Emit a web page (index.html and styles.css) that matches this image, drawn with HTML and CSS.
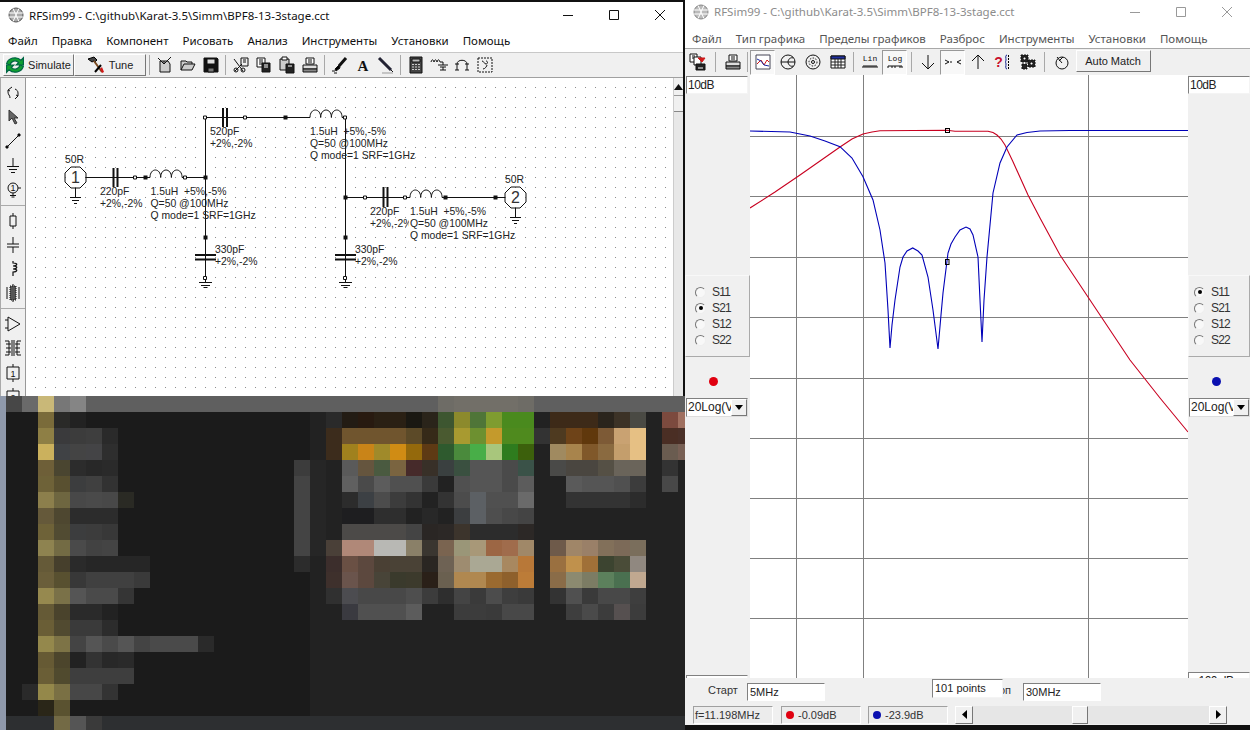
FILE: index.html
```html
<!DOCTYPE html>
<html lang="ru">
<head>
<meta charset="utf-8">
<title>RFSim99</title>
<link rel="stylesheet" href="styles.css">
</head>
<body>
<div class="desktop">

<section class="win win-left">
  <header class="title">
    <svg class="appicon" viewBox="0 0 16 16"><circle cx="8" cy="8" r="7" fill="#aaa" stroke="#555"/><path d="M1 6h14M1 10h14M5 1.500L11 14.500M11 1.500L5 14.500" stroke="#fff"/></svg>
    <span class="title-text">RFSim99 - C:\github\Karat-3.5\Simm\BPF8-13-3stage.cct</span>
    <div class="caption">
      <span class="capbtn"><svg viewBox="0 0 12 12"><path d="M1 6.500h10"/></svg></span>
      <span class="capbtn"><svg viewBox="0 0 12 12"><path d="M1.500 1.500h9v9h-9z"/></svg></span>
      <span class="capbtn"><svg viewBox="0 0 12 12"><path d="M1 1l10 10M11 1L1 11"/></svg></span>
    </div>
  </header>
  <nav class="menu">
    <span>Файл</span><span>Правка</span><span>Компонент</span><span>Рисовать</span><span>Анализ</span><span>Инструменты</span><span>Установки</span><span>Помощь</span>
  </nav>
  <div class="toolbar toolbar-left">
    <button class="tbtn tbtn-sim"><svg class="ico18" viewBox="1.500 1.500 15 15"><path d="M2 8a7 6 0 0 1 12-3l2-2v6h-6l2-2a4 4 0 0 0-7 2z" fill="#10a030" stroke="#064"/><path d="M16 10a7 6 0 0 1-12 3l-2 2v-6h6l-2 2a4 4 0 0 0 7-2z" fill="#10a030" stroke="#064"/></svg>Simulate</button>
    <button class="tbtn tbtn-tune"><svg class="ico18" viewBox="0 0 18 18"><path d="M1 3l6-2 3 3-2 2-1-1-2 1z" fill="#444" stroke="#000"/><path d="M7 5l8 11" stroke="#7a4a20" stroke-width="2" fill="none"/><path d="M14 9l-6 7" stroke="#000" stroke-width="2" fill="none"/><path d="M15 11l2 5-2 1-2-4z" fill="#d01818"/></svg>Tune</button>
    <i class="sep"></i>
    <span class="cell"><svg class="ico" viewBox="0 0 18 18"><path d="M4 5h8l2 3v8H4z" fill="#ccc"/><path d="M2 2l6 6 7-7M8 8v-3"/></svg></span>
    <span class="cell"><svg class="ico" viewBox="0 0 18 18"><path d="M2 14V5h5l1 1h5v2M2 14l3-6h11l-3 6z" fill="#ccc"/></svg></span>
    <span class="cell"><svg class="ico" viewBox="0 0 18 18"><path d="M2 2h13l1 1v13H2z" fill="#111"/><path d="M5 3h8v5H5z" fill="#ddd"/><path d="M6 12h6v4H6z" fill="#777"/></svg></span>
    <i class="sep"></i>
    <span class="cell"><svg class="ico" viewBox="0 0 18 18"><path d="M9 2h7v8H9zM11 4h3M11 6h3"/><path d="M2 3l9 12M10 8L3 15"/><circle cx="4" cy="14" r="2"/><circle cx="11" cy="14" r="2"/></svg></span>
    <span class="cell"><svg class="ico" viewBox="0 0 18 18"><path d="M2 2h8v9H2zM4 4h4M4 6h4M4 8h4" fill="#fff"/><path d="M7 7h8v9H7z" fill="#222"/><path d="M9 9h4M9 11h4" stroke="#fff"/></svg></span>
    <span class="cell"><svg class="ico" viewBox="0 0 18 18"><path d="M2 3h9v11H2z" fill="#ccc"/><path d="M4 1h5v3H4z" fill="#fff"/><path d="M8 8h8v9H8z" fill="#222"/><path d="M10 10h4" stroke="#fff"/></svg></span>
    <span class="cell"><svg class="ico" viewBox="0 0 18 18"><path d="M5 2h8v6H5zM7 4h4M7 6h4" fill="#fff"/><path d="M2 9h14v4H2z" fill="#ddd"/><path d="M2 13h14v3H2z" fill="#888"/></svg></span>
    <i class="sep"></i>
    <span class="cell"><svg class="ico" viewBox="0 0 18 18"><path d="M15 2l-7 8" stroke-width="3"/><path d="M8 9l-4 4 1 2 4-3z" fill="#000"/><path d="M1 15h3M3 17h3"/></svg></span>
    <span class="cell"><svg class="ico" viewBox="0 0 18 18"><text x="9" y="15" class="serif-a">A</text></svg></span>
    <span class="cell"><svg class="ico" viewBox="0 0 18 18"><path d="M2 2l12 12" stroke="#223" stroke-width="3"/><path d="M14 14l2 2"/><path d="M5 17h11" stroke="#999"/></svg></span>
    <i class="sep"></i>
    <span class="cell"><svg class="ico" viewBox="0 0 18 18"><path d="M3 1h12v16H3z" fill="#444"/><path d="M5 3h8v3H5z" fill="#bbb"/><path d="M5 8.500h8M5 11h8M5 13.500h8" stroke="#ccc" stroke-dasharray="2 1"/></svg></span>
    <span class="cell"><svg class="ico" viewBox="0 0 18 18"><path d="M1 6c1-3 2-3 3 0c1-3 2-3 3 0c1-3 2-3 3 0h3v3M8 9h10M10 11h6M13 11v3M10 14h6"/></svg></span>
    <span class="cell"><svg class="ico" viewBox="0 0 18 18"><path d="M4 14V8c0-5 10-5 10 0v6M2 14h4M12 14h4M2 8h4M12 8h4"/></svg></span>
    <span class="cell"><svg class="ico" viewBox="0 0 18 18"><path d="M2 2h14v14H2z" stroke-dasharray="2 1"/><path d="M6 5c2 0 2 3 4 3s2-3 0-3M7 13c2 0 4-3 4-4"/></svg></span>
  </div>
  <div class="body">
    <aside class="palette">
      <span class="tool"><svg class="ico" viewBox="0 0 18 18"><path d="M8 3L4 6l2 1M4 6v2c0 3 2 3 2 6M11 15l3-3-2-1M14 12V9c0-2-1-3-3-4"/></svg></span>
      <span class="tool"><svg class="ico" viewBox="0 0 18 18"><path d="M5 2v11l3-3 3 6 2-1-3-5h4z" fill="#666" stroke="#333"/></svg></span>
      <span class="tool"><svg class="ico" viewBox="0 0 18 18"><path d="M3 15L15 3"/><path d="M2 14h2v2H2zM14 2h2v2h-2z" fill="#000"/></svg></span>
      <span class="tool"><svg class="ico" viewBox="0 0 18 18"><path d="M9 2v8M3 10.500h12M5 13.500h8M7 16.500h4"/></svg></span>
      <span class="tool"><svg class="ico" viewBox="0 0 18 18"><circle cx="9" cy="8" r="5"/><path d="M9 13v2M6 15.500h6M7.500 17h3M14 8h3"/><text x="9" y="11" class="mini">1</text></svg></span>
      <i class="hsep"></i>
      <span class="tool"><svg class="ico" viewBox="0 0 18 18"><path d="M6 4h6v10H6zM9 1v3M9 14v3"/></svg></span>
      <span class="tool"><svg class="ico" viewBox="0 0 18 18"><path d="M9 1v7M3 8h12M3 11h12M9 11v6"/></svg></span>
      <span class="tool"><svg class="ico" viewBox="0 0 18 18"><path d="M9 1v2c6 0 4 3 0 3c6 0 4 3 0 3c6 0 4 3 0 3v4" stroke-width="1.200"/></svg></span>
      <span class="tool"><svg class="ico" viewBox="0 0 18 18"><path d="M9 0v2M9 16v2M3 3v12M15 3v12"/><path d="M6 2h6v14H6z" fill="#555" stroke-dasharray="1 1"/></svg></span>
      <i class="hsep hsep-b"></i>
      <span class="tool"><svg class="ico" viewBox="0 0 18 18"><path d="M4 2l12 7-12 7zM1 5h3M1 13h3"/></svg></span>
      <span class="tool"><svg class="ico" viewBox="0 0 18 18"><path d="M1 2h4v14H1M17 2h-4v14h4M8 1v16M10 1v16M2 5h5M2 9h5M2 13h5M11 5h5M11 9h5M11 13h5"/></svg></span>
      <span class="tool tool-gap"><svg class="ico" viewBox="0 0 18 18"><path d="M3 3h12v12H3zM9 0v3M9 15v3"/><text x="9" y="13" class="mini">1</text></svg></span>
      <span class="tool"><svg class="ico" viewBox="0 0 18 18"><path d="M3 3h12v12H3zM9 0v3M9 15v3"/><text x="9" y="13" class="mini">2</text></svg></span>
    </aside>
    <svg class="canvas" viewBox="27 78 646 318">
      <defs><pattern id="dots" x="35" y="87" width="10" height="10" patternUnits="userSpaceOnUse"><rect width="1" height="1" fill="#8c8c8c"/></pattern></defs>
      <rect x="27" y="78" width="646" height="318" fill="url(#dots)"/>
      <g class="wire">
        <path d="M85.500 177.500H135M145 177.500H150M182 177.500H205.500M205.500 117.500V278M205.500 117.500H245M245 117.500H303M303 117.500H310M342 117.500H345.500V278M345.500 197.500H365M365 197.500H405M405 197.500H410M442 197.500H505M75.500 188V197M205.500 278V282M345.500 278V282M515.500 208V217M135 177.500H145"/>
        <path d="M150 177.500c0-10 10.700-10 10.700 0c0-10 10.700-10 10.700 0c0-10 10.700-10 10.700 0M310 117.500c0-10 10.700-10 10.700 0c0-10 10.700-10 10.700 0c0-10 10.700-10 10.700 0M410 197.500c0-10 10.700-10 10.700 0c0-10 10.700-10 10.700 0c0-10 10.700-10 10.700 0"/>
        <path d="M70 197.500h11M72 200.500h7M74 203.500h3M199 282.500h13M201 285.500h9M203.500 287.500h4M339 282.500h13M341 285.500h9M343.500 287.500h4M510 217.500h11M512 220.500h7M514 223.500h3"/>
        <path d="M65 173l6-6h9l6 6v9l-6 6h-9l-6-6zM505 193l6-6h9l6 6v9l-6 6h-9l-6-6z"/>
      </g>
      <g class="plate">
        <path d="M113.500 168v19M117.500 168v19M223 108v19M227 108v19M383.500 187v20M387.500 187v20M195 255h21M195 259.500h21M335 255h21M335 259.500h21"/>
      </g>
      <g class="open">
        <path d="M133.500 176h3v3h-3zM183.500 176h3v3h-3zM203.500 116h3v3h-3zM243.500 116h3v3h-3zM343.500 116h3v3h-3zM363.500 196h3v3h-3zM403.500 196h3v3h-3zM203.500 276.500h3v3h-3zM343.500 276.500h3v3h-3z"/>
      </g>
      <g class="solid">
        <path d="M143.500 175.500h4v4h-4zM203.500 175.500h4v4h-4zM203.500 235.500h4v4h-4zM283.500 115.500h4v4h-4zM343.500 195.500h4v4h-4zM343.500 235.500h4v4h-4zM443.500 195.500h4v4h-4zM493.500 195.500h4v4h-4z"/>
      </g>
      <g class="lbl">
        <text x="65" y="163">50R</text>
        <text x="505" y="183">50R</text>
        <text x="100" y="195">220pF</text><text x="100" y="207">+2%,-2%</text>
        <text x="150.500" y="195">1.5uH  +5%,-5%</text><text x="150.500" y="207">Q=50 @100MHz</text><text x="150.500" y="219">Q mode=1 SRF=1GHz</text>
        <text x="210" y="135">520pF</text><text x="210" y="147">+2%,-2%</text>
        <text x="310" y="135">1.5uH  +5%,-5%</text><text x="310" y="147">Q=50 @100MHz</text><text x="310" y="159">Q mode=1 SRF=1GHz</text>
        <text x="215" y="253">330pF</text><text x="215" y="265">+2%,-2%</text>
        <text x="355" y="253">330pF</text><text x="355" y="265">+2%,-2%</text>
        <text x="370" y="215">220pF</text><text x="370" y="227">+2%,-2%</text>
        <rect x="409" y="217" width="80" height="12" fill="#fff"/>
        <text x="410" y="215">1.5uH  +5%,-5%</text><text x="410" y="227">Q=50 @100MHz</text><text x="410" y="239">Q mode=1 SRF=1GHz</text>
      </g>
      <text x="75.500" y="183" class="portnum">1</text>
      <text x="515.500" y="203" class="portnum">2</text>
    </svg>
    <div class="vscroll">
      <span class="vbtn"><svg viewBox="0 0 9 6"><path d="M4.500 0L9 6H0z"/></svg></span>
      <span class="vthumb"></span>
    </div>
  </div>
</section>

<section class="win win-right">
  <header class="title title-r">
    <svg class="appicon" viewBox="0 0 16 16"><circle cx="8" cy="8" r="7" fill="#bbb" stroke="#888"/><path d="M1 6h14M1 10h14M5 1.500L11 14.500M11 1.500L5 14.500" stroke="#fff"/></svg>
    <span class="title-text">RFSim99 - C:\github\Karat-3.5\Simm\BPF8-13-3stage.cct</span>
    <div class="caption caption-dim">
      <span class="capbtn"><svg viewBox="0 0 12 12"><path d="M1 6.500h10"/></svg></span>
      <span class="capbtn"><svg viewBox="0 0 12 12"><path d="M1.500 1.500h9v9h-9z"/></svg></span>
      <span class="capbtn"><svg viewBox="0 0 12 12"><path d="M1 1l10 10M11 1L1 11"/></svg></span>
    </div>
  </header>
  <nav class="menu menu-r">
    <span>Файл</span><span>Тип графика</span><span>Пределы графиков</span><span>Разброс</span><span>Инструменты</span><span>Установки</span><span>Помощь</span>
  </nav>
  <div class="toolbar toolbar-right">
    <span class="rcell"><svg class="ico" viewBox="0 0 18 18"><path d="M1 1h7v8H1zM3 3h3M3 5h3" fill="#fff"/><path d="M5 4h7v8H5z" fill="#fff"/><path d="M9 5h7l-3 4z" fill="#d01818" stroke="#d01818"/><path d="M7 11h9v6H7z" fill="#222"/><path d="M9 15h5" stroke="#fff"/></svg></span>
    <i class="sep sep-10"></i>
    <span class="rcell"><svg class="ico" viewBox="0 0 18 18"><path d="M5 2h8v6H5zM7 4h4M7 6h4" fill="#fff"/><path d="M2 9h14v4H2z" fill="#ddd"/><path d="M2 13h14v3H2z" fill="#888"/></svg></span>
    <i class="sep sep-5"></i>
    <span class="rcell is-on"><svg class="ico" viewBox="0 0 18 18"><path d="M2 2h14v14H2z" fill="#fff" stroke="#445"/><path d="M3 11l4-4 3 5 3-5 2 2" stroke="#d01818"/><path d="M3 6l4 2 3 4 5 1" stroke="#1828a0"/></svg></span>
    <span class="rcell"><svg class="ico" viewBox="0 0 18 18"><circle cx="9" cy="9" r="7"/><path d="M2 9h14M9 9c0-3 3-5 5-4M9 9c0 3 3 5 5 4"/></svg></span>
    <span class="rcell"><svg class="ico" viewBox="0 0 18 18"><circle cx="9" cy="9" r="7"/><circle cx="9" cy="9" r="4" stroke-dasharray="1.500 1.500"/><circle cx="9" cy="9" r="1.500"/></svg></span>
    <span class="rcell"><svg class="ico" viewBox="0 0 18 18"><path d="M2 3h14v12H2z" fill="#fff"/><path d="M2 3h14v3H2z" fill="#2030a0"/><path d="M2 9h14M2 12h14M6 6v9M9 6v9M12 6v9" stroke="#222"/></svg></span>
    <i class="sep sep-7"></i>
    <span class="rcell"><svg class="ico" viewBox="0 0 18 18"><text x="9" y="8" class="tiny">Lin</text><path d="M2 13h14M2 13v2M4 13v2M6 13v2M8 13v2M10 13v2M12 13v2M14 13v2M16 13v2"/></svg></span>
    <span class="rcell is-on"><svg class="ico" viewBox="0 0 18 18"><text x="9" y="8" class="tiny">Log</text><path d="M2 13h14M2 13v2M6 13v2M9 13v2M14 13v2M16 13v2"/></svg></span>
    <i class="sep sep-8"></i>
    <span class="rcell"><svg class="ico" viewBox="0 0 18 18"><path d="M9 2v14M3 10l6 6 6-6"/></svg></span>
    <span class="rcell is-on"><svg class="ico" viewBox="0 0 18 18"><path d="M1 7l4 2-4 2M17 7l-4 2 4 2M6 9h2"/></svg></span>
    <span class="rcell"><svg class="ico" viewBox="0 0 18 18"><path d="M9 16V2M3 8l6-6 6 6"/></svg></span>
    <span class="rcell"><svg class="ico" viewBox="0 0 18 18"><text x="4.500" y="14" class="redq">?</text><path d="M13 2c-2 0-1 3-1 5s-1 2-1 2 1 0 1 2-1 5 1 5" stroke="#102090"/><path d="M14.500 2v14" stroke="#000" stroke-dasharray="2 1"/></svg></span>
    <span class="rcell"><svg class="ico" viewBox="0 0 18 18"><path d="M2 2h7v7H2zM9 7h7v7H9zM3 11h5v5H3z" fill="#222" stroke-dasharray="2 1"/><circle cx="5.500" cy="5.500" r="1.500" fill="#fff"/><circle cx="12.500" cy="10.500" r="1.500" fill="#fff"/></svg></span>
    <i class="sep sep-9"></i>
    <span class="rcell"><svg class="ico" viewBox="0 0 18 18"><circle cx="9" cy="10" r="6"/><path d="M4 4l5 6M6 8l4-4"/></svg></span>
    <button class="tbtn tbtn-match">Auto Match</button>
  </div>
  <div class="main">
    <aside class="side">
      <div class="edit">10dB</div>
      <div class="group">
        <label class="radio-row"><i class="radio"></i>S11</label>
        <label class="radio-row"><i class="radio radio-on"></i>S21</label>
        <label class="radio-row"><i class="radio"></i>S12</label>
        <label class="radio-row"><i class="radio"></i>S22</label>
      </div>
      <i class="led led-red"></i>
      <div class="combo"><span class="combo-text">20Log(V)</span><span class="combo-btn"><svg viewBox="0 0 8 5"><path d="M0 0h8L4 5z"/></svg></span></div>
      <div class="edit edit-low"></div>
    </aside>
    <svg class="graph" viewBox="750 75 438 603">
      <path class="grid" d="M750 136.500H1188M750 196.500H1188M750 257.500H1188M750 317.500H1188M750 378.500H1188M750 438.500H1188M750 498.500H1188M750 558.500H1188M750 618.500H1188M796.500 75V678M863.500 75V678M1088.500 75V678"/>
      <polyline class="trace-red" points="750,208 775,192 800,175 820,161 840,147 852,139 863,134 872,132 880,130.700 947,130.300 955,131.300 988,131.300 993,132.500 997,135 1001,139 1005,145 1013,161.700 1028,195 1040,218 1060,255 1090,300 1130,360 1160,398 1188,432"/>
      <polyline class="trace-blue" points="750,131 790,132 810,136 825,141 840,146.700 852,158 863,176.700 873,200 880,230 885,263 888,310 890,348 892,325 895,300 900,267 903,257 907,251 912.700,248 918,251 922,255 928,277 933,310 938,349 941,315 943,293 948,253 951,244 955,237 960,230 966,227 970,229 973,235 978,257 980,300 982,342 984,300 987,257 993,193 1000,163 1007,147 1017,135 1027,132.500 1040,131 1070,130.500 1188,130.500"/>
      <rect class="mark" x="945.500" y="128.500" width="4" height="4"/>
      <rect class="mark" x="945.500" y="259.500" width="3.500" height="5"/>
    </svg>
    <aside class="side side-r">
      <div class="edit">10dB</div>
      <div class="group">
        <label class="radio-row"><i class="radio radio-on"></i>S11</label>
        <label class="radio-row"><i class="radio"></i>S21</label>
        <label class="radio-row"><i class="radio"></i>S12</label>
        <label class="radio-row"><i class="radio"></i>S22</label>
      </div>
      <i class="led led-blue"></i>
      <div class="combo"><span class="combo-text">20Log(V)</span><span class="combo-btn"><svg viewBox="0 0 8 5"><path d="M0 0h8L4 5z"/></svg></span></div>
      <div class="edit edit-low edit-low-r">-100 dB</div>
    </aside>
  </div>
  <div class="range">
    <span class="range-start">Старт</span>
    <div class="edit edit-range">5MHz</div>
    <span class="range-stop">Стоп</span>
    <div class="edit edit-range">30MHz</div>
    <div class="edit points">101 points</div>
  </div>
  <div class="status">
    <span class="stat stat-f">f=11.198MHz</span>
    <span class="stat"><i class="led led-sm led-red"></i>-0.09dB</span>
    <span class="stat"><i class="led led-sm led-blue"></i>-23.9dB</span>
    <div class="hscroll">
      <span class="hbtn"><svg viewBox="0 0 5 9"><path d="M5 0v9L0 4.500z"/></svg></span>
      <span class="hthumb"></span>
      <span class="hbtn hbtn-end"><svg viewBox="0 0 5 9"><path d="M0 0v9l5-4.500z"/></svg></span>
    </div>
  </div>
</section>

<section class="win win-blur">
<svg class="mosaic" viewBox="0 0 43 21" shape-rendering="crispEdges">
<rect class="wide" x="0" y="0" width="43" height="1" fill="#5f5f5f"/>
<rect class="wide" x="0" y="1" width="19" height="19" fill="#1b1b1b"/>
<rect class="wide" x="19" y="1" width="24" height="19" fill="#222"/>
<rect class="wide" x="0" y="20" width="43" height="1" fill="#2d2f31"/>
<g transform="translate(0 0)"><rect x="0" fill="#474747"/><rect x="1" fill="#6a6a6a"/><rect x="2" fill="#c9b878"/><rect x="3" fill="#777"/><rect x="4" fill="#858585"/><rect x="27" fill="#6e6c66"/><rect x="28" fill="#726f68"/><rect x="29" fill="#726f68"/><rect x="30" fill="#726f68"/><rect x="31" fill="#726f68"/><rect x="32" fill="#6e6c66"/></g>
<g transform="translate(0 1)"><rect x="2" fill="#7a6b3a"/><rect x="3" fill="#2a2a28"/><rect x="4" fill="#222"/><rect x="20" fill="#2a2a2a"/><rect x="21" fill="#231c14"/><rect x="22" fill="#281a10"/><rect x="23" fill="#2a2014"/><rect x="24" fill="#2a2014"/><rect x="25" fill="#1a1812"/><rect x="26" fill="#2a241a"/><rect x="27" fill="#3d5630"/><rect x="28" fill="#8c8a2c"/><rect x="29" fill="#4f7538"/><rect x="30" fill="#7f9c30"/><rect x="31" fill="#4a8a1e"/><rect x="32" fill="#4a8a1e"/><rect x="34" fill="#3d2a18"/><rect x="35" fill="#3d2a18"/><rect x="36" fill="#3d2a18"/><rect x="37" fill="#2a241c"/><rect x="38" fill="#3c3226"/><rect x="39" fill="#4a4a44"/><rect x="41" fill="#7c4a3e"/><rect x="42" fill="#a07060"/></g>
<g transform="translate(0 2)"><rect x="2" fill="#8e7f45"/><rect x="3" fill="#3a3a3c"/><rect x="4" fill="#3c3c3c"/><rect x="5" fill="#3e3e3e"/><rect x="6" fill="#2a2a2a"/><rect x="20" fill="#3c2c1c"/><rect x="21" fill="#70552e"/><rect x="22" fill="#70552e"/><rect x="23" fill="#70552e"/><rect x="24" fill="#70552e"/><rect x="25" fill="#5c4a28"/><rect x="26" fill="#362a18"/><rect x="27" fill="#4a5a30"/><rect x="28" fill="#a89a30"/><rect x="29" fill="#6d9030"/><rect x="30" fill="#c49a2c"/><rect x="31" fill="#4f8a1e"/><rect x="32" fill="#4f8a1e"/><rect x="33" fill="#333"/><rect x="34" fill="#4e3a20"/><rect x="35" fill="#6e4318"/><rect x="36" fill="#60380c"/><rect x="37" fill="#7d5a36"/><rect x="38" fill="#c9a272"/><rect x="39" fill="#e6c084"/><rect x="41" fill="#4a2e24"/><rect x="42" fill="#4a3028"/></g>
<g transform="translate(0 3)"><rect x="2" fill="#cbb15d"/><rect x="3" fill="#404245"/><rect x="4" fill="#444"/><rect x="5" fill="#444446"/><rect x="6" fill="#2e2e2e"/><rect x="20" fill="#3c2c1c"/><rect x="21" fill="#a0811e"/><rect x="22" fill="#c98418"/><rect x="23" fill="#a08a2a"/><rect x="24" fill="#d08c14"/><rect x="25" fill="#94690c"/><rect x="26" fill="#5e3a14"/><rect x="27" fill="#2e5a2e"/><rect x="28" fill="#4a8a3c"/><rect x="29" fill="#48ae48"/><rect x="30" fill="#a8c67c"/><rect x="31" fill="#2e7c1e"/><rect x="32" fill="#3c600c"/><rect x="34" fill="#a08a60"/><rect x="35" fill="#a8844c"/><rect x="36" fill="#80582a"/><rect x="37" fill="#8a6a40"/><rect x="38" fill="#c49e6c"/><rect x="39" fill="#e6c084"/><rect x="41" fill="#6a5c50"/><rect x="42" fill="#786055"/></g>
<g transform="translate(0 4)"><rect x="2" fill="#6e5f38"/><rect x="3" fill="#4a4530"/><rect x="4" fill="#2c2c2c"/><rect x="5" fill="#282828"/><rect x="6" fill="#2a2a2a"/><rect x="18" fill="#3c3c3c"/><rect x="19" fill="#262626"/><rect x="21" fill="#5a5a5a"/><rect x="22" fill="#65553e"/><rect x="23" fill="#4a5a40"/><rect x="24" fill="#7a6440"/><rect x="25" fill="#462a2a"/><rect x="26" fill="#383028"/><rect x="27" fill="#3a4040"/><rect x="28" fill="#3a5040"/><rect x="29" fill="#555"/><rect x="30" fill="#555"/><rect x="31" fill="#4a4a4a"/><rect x="32" fill="#3a5248"/><rect x="34" fill="#4a4a48"/><rect x="35" fill="#4a4640"/><rect x="36" fill="#4a4640"/><rect x="37" fill="#555045"/><rect x="38" fill="#6a645a"/><rect x="39" fill="#6a645a"/><rect x="41" fill="#333"/></g>
<g transform="translate(0 5)"><rect x="2" fill="#6e6238"/><rect x="3" fill="#595030"/><rect x="4" fill="#3c3d3e"/><rect x="5" fill="#404040"/><rect x="6" fill="#323232"/><rect x="18" fill="#444"/><rect x="19" fill="#262626"/><rect x="21" fill="#606060"/><rect x="22" fill="#4a4a4a"/><rect x="23" fill="#5c5c5c"/><rect x="24" fill="#505050"/><rect x="25" fill="#505050"/><rect x="26" fill="#3a3a3a"/><rect x="28" fill="#505050"/><rect x="29" fill="#555"/><rect x="30" fill="#555"/><rect x="31" fill="#4a4a4a"/><rect x="32" fill="#5c5c5c"/><rect x="35" fill="#5a5a5a"/><rect x="36" fill="#555"/><rect x="37" fill="#555"/><rect x="38" fill="#505050"/><rect x="39" fill="#3c3c3c"/><rect x="41" fill="#484848"/></g>
<g transform="translate(0 6)"><rect x="2" fill="#8c7f4c"/><rect x="3" fill="#6e6640"/><rect x="4" fill="#484848"/><rect x="5" fill="#4a4a4a"/><rect x="6" fill="#484848"/><rect x="7" fill="#2a2a24"/><rect x="18" fill="#444"/><rect x="19" fill="#262626"/><rect x="21" fill="#2c2c2c"/><rect x="22" fill="#3c4044"/><rect x="23" fill="#4c4c4c"/><rect x="24" fill="#3c3c3c"/><rect x="25" fill="#333"/><rect x="27" fill="#333"/><rect x="28" fill="#4c4c4c"/><rect x="29" fill="#5c6064"/><rect x="30" fill="#505050"/><rect x="31" fill="#505050"/><rect x="32" fill="#6a6a6a"/><rect x="35" fill="#333"/><rect x="36" fill="#333"/><rect x="37" fill="#333"/><rect x="38" fill="#333"/><rect x="39" fill="#2c2c2c"/></g>
<g transform="translate(0 7)"><rect x="2" fill="#65593a"/><rect x="3" fill="#4e4730"/><rect x="4" fill="#2c2c2c"/><rect x="5" fill="#2c2c2c"/><rect x="6" fill="#2c2c2c"/><rect x="18" fill="#444"/><rect x="19" fill="#262626"/><rect x="21" fill="#1e1e20"/><rect x="22" fill="#1e1e20"/><rect x="23" fill="#2e2e2e"/><rect x="24" fill="#2e2e2e"/><rect x="26" fill="#282828"/><rect x="28" fill="#3c3e40"/><rect x="29" fill="#5c6064"/><rect x="30" fill="#4e4e4e"/><rect x="31" fill="#484848"/><rect x="32" fill="#444"/></g>
<g transform="translate(0 8)"><rect x="2" fill="#6e6238"/><rect x="3" fill="#514b32"/><rect x="4" fill="#3c3d3e"/><rect x="5" fill="#3c3c3c"/><rect x="6" fill="#383838"/><rect x="18" fill="#444"/><rect x="19" fill="#262626"/><rect x="21" fill="#4c4a48"/><rect x="22" fill="#4c4a48"/><rect x="23" fill="#4c4a48"/><rect x="24" fill="#4c4a48"/><rect x="25" fill="#444"/><rect x="26" fill="#2a2624"/><rect x="27" fill="#2c2826"/><rect x="28" fill="#3c342c"/><rect x="29" fill="#2c2c2c"/><rect x="30" fill="#2c2c2c"/><rect x="31" fill="#2c2c2c"/><rect x="32" fill="#2c2826"/></g>
<g transform="translate(0 9)"><rect x="2" fill="#8e8350"/><rect x="3" fill="#736b44"/><rect x="4" fill="#4a4a4a"/><rect x="5" fill="#424242"/><rect x="6" fill="#444"/><rect x="18" fill="#444"/><rect x="19" fill="#262626"/><rect x="20" fill="#4a4038"/><rect x="21" fill="#b08878"/><rect x="22" fill="#b08878"/><rect x="23" fill="#b8b8b4"/><rect x="24" fill="#b8b8b4"/><rect x="25" fill="#8a8068"/><rect x="26" fill="#3a3630"/><rect x="27" fill="#7a6450"/><rect x="28" fill="#9a9678"/><rect x="29" fill="#a89878"/><rect x="30" fill="#9c6644"/><rect x="31" fill="#a06c4c"/><rect x="32" fill="#a08868"/><rect x="34" fill="#6e5a4a"/><rect x="35" fill="#a08668"/><rect x="36" fill="#9a8068"/><rect x="37" fill="#82705a"/><rect x="38" fill="#7c6a58"/><rect x="39" fill="#7a6e5c"/></g>
<g transform="translate(0 10)"><rect x="2" fill="#655a38"/><rect x="3" fill="#463f2c"/><rect x="4" fill="#2a2a2a"/><rect x="5" fill="#262626"/><rect x="6" fill="#262626"/><rect x="7" fill="#262626"/><rect x="8" fill="#262626"/><rect x="18" fill="#2c2c2c"/><rect x="20" fill="#3c2e2c"/><rect x="21" fill="#6a5044"/><rect x="22" fill="#5c483e"/><rect x="23" fill="#4a4034"/><rect x="24" fill="#4a4236"/><rect x="25" fill="#4a4236"/><rect x="26" fill="#2a2622"/><rect x="27" fill="#6e6254"/><rect x="28" fill="#9e8c70"/><rect x="29" fill="#aaa894"/><rect x="30" fill="#aaa894"/><rect x="31" fill="#a88860"/><rect x="32" fill="#b87838"/><rect x="34" fill="#9a7040"/><rect x="35" fill="#c0914c"/><rect x="36" fill="#a07038"/><rect x="37" fill="#3c4430"/><rect x="38" fill="#4a4c38"/><rect x="39" fill="#908880"/></g>
<g transform="translate(0 11)"><rect x="2" fill="#6a5e3a"/><rect x="3" fill="#585030"/><rect x="4" fill="#383838"/><rect x="5" fill="#404040"/><rect x="6" fill="#404040"/><rect x="7" fill="#404040"/><rect x="8" fill="#3a3a3a"/><rect x="20" fill="#3e302c"/><rect x="21" fill="#6a544c"/><rect x="22" fill="#5c483e"/><rect x="23" fill="#484438"/><rect x="24" fill="#3a3a2c"/><rect x="25" fill="#3c3a2c"/><rect x="26" fill="#2a2018"/><rect x="27" fill="#6a6050"/><rect x="28" fill="#b08850"/><rect x="29" fill="#b08850"/><rect x="30" fill="#9a6a30"/><rect x="31" fill="#8e602c"/><rect x="32" fill="#bc7c38"/><rect x="34" fill="#8a6c48"/><rect x="35" fill="#8c8a70"/><rect x="36" fill="#7c7c64"/><rect x="37" fill="#5c805c"/><rect x="38" fill="#4a7050"/><rect x="39" fill="#c0a890"/></g>
<g transform="translate(0 12)"><rect x="2" fill="#96894f"/><rect x="3" fill="#7a7148"/><rect x="4" fill="#555"/><rect x="5" fill="#4a4a4a"/><rect x="6" fill="#4a4a4a"/><rect x="7" fill="#353535"/><rect x="20" fill="#303030"/><rect x="21" fill="#4c4c50"/><rect x="22" fill="#484848"/><rect x="23" fill="#484848"/><rect x="24" fill="#484848"/><rect x="25" fill="#4e4e4e"/><rect x="26" fill="#3c3c3c"/><rect x="27" fill="#2e2e2e"/><rect x="28" fill="#444"/><rect x="29" fill="#3a3a3a"/><rect x="30" fill="#4c4c4c"/><rect x="31" fill="#3e3e3e"/><rect x="32" fill="#3a3a3a"/><rect x="34" fill="#333"/><rect x="35" fill="#505050"/><rect x="36" fill="#3a3a3a"/><rect x="37" fill="#484848"/><rect x="38" fill="#484848"/><rect x="39" fill="#3e3e3e"/></g>
<g transform="translate(0 13)"><rect x="2" fill="#655a36"/><rect x="3" fill="#4a432c"/><rect x="4" fill="#2a2a2a"/><rect x="5" fill="#2a2a2a"/><rect x="6" fill="#222"/><rect x="21" fill="#3a3a40"/><rect x="22" fill="#505050"/><rect x="23" fill="#505050"/><rect x="24" fill="#505050"/><rect x="25" fill="#5c5c5c"/><rect x="28" fill="#3c3c3c"/><rect x="29" fill="#3c3c3c"/><rect x="30" fill="#3a3a3a"/><rect x="31" fill="#484848"/><rect x="32" fill="#484848"/><rect x="35" fill="#3e3e3e"/><rect x="36" fill="#4a4a4a"/><rect x="37" fill="#3c3c3c"/><rect x="38" fill="#565050"/><rect x="39" fill="#3c3c3c"/></g>
<g transform="translate(0 14)"><rect x="2" fill="#6a5e36"/><rect x="3" fill="#514a30"/><rect x="4" fill="#3a3a3a"/><rect x="5" fill="#3a3a3a"/><rect x="6" fill="#2c2c2c"/></g>
<g transform="translate(0 15)"><rect x="2" fill="#94884c"/><rect x="3" fill="#7d7346"/><rect x="4" fill="#444"/><rect x="5" fill="#555"/><rect x="6" fill="#4a4a4a"/><rect x="7" fill="#555"/><rect x="8" fill="#444"/><rect x="9" fill="#4a4a4a"/><rect x="10" fill="#4a4a4a"/><rect x="11" fill="#4a4a4a"/><rect x="12" fill="#2a2a2a"/></g>
<g transform="translate(0 16)"><rect x="2" fill="#665a34"/><rect x="3" fill="#4c452c"/><rect x="4" fill="#222"/><rect x="5" fill="#333"/><rect x="6" fill="#282828"/><rect x="7" fill="#2a2a2a"/></g>
<g transform="translate(0 17)"><rect x="2" fill="#6a5e36"/><rect x="3" fill="#504a2e"/><rect x="4" fill="#3e3e3e"/><rect x="5" fill="#3e3e3e"/><rect x="6" fill="#3e3e3e"/><rect x="7" fill="#3e3e3e"/></g>
<g transform="translate(0 18)"><rect x="1" fill="#2a2a2a"/><rect x="2" fill="#94884a"/><rect x="3" fill="#7a7044"/><rect x="4" fill="#474747"/><rect x="5" fill="#474747"/><rect x="6" fill="#333"/></g>
<g transform="translate(0 19)"><rect x="2" fill="#2a2618"/><rect x="3" fill="#5a5230"/></g>
<g transform="translate(0 20)"><rect x="3" fill="#736a45"/><rect x="4" fill="#555"/><rect x="5" fill="#3a3a3a"/></g>
</svg>
</section>

</div>
</body>
</html>
```

FILE: styles.css
```css
* { box-sizing: border-box; }
html, body { margin: 0; padding: 0; }
body { font-family: "Liberation Sans", Arial, sans-serif; font-size: 12px; color: #222; background: #111; overflow: hidden; }
.desktop { position: relative; width: 1250px; height: 730px; background: #111; overflow: hidden; }
.win { position: absolute; display: flex; flex-direction: column; overflow: hidden; }
.win-left { left: 0; top: 2px; width: 683px; height: 394px; background: #f0f0f0; }
.win-right { left: 685px; top: 0; width: 565px; height: 725px; background: #f0f0f0; }
.win-blur { left: 0; top: 396px; width: 685px; height: 334px; border-left: 6px solid #8f99ab; background: #1b1b1b; display: block; }

.mosaic { display: block; width: 688px; height: 336px; }
.mosaic g rect { width: 1px; height: 1px; }

.title { height: 26px; flex: none; background: #fff; display: flex; align-items: center; padding-left: 8px; gap: 5px; font-family: "Noto Sans", "Open Sans", sans-serif; font-size: 11.500px; color: #111; }
.title-r { height: 28px; align-items: flex-start; padding-top: 4px; padding-left: 8px; color: #8c8c8c; }
.title-r .caption { margin-top: -4px; height: 24px; }
.appicon { width: 16px; height: 16px; flex: none; }
.caption { margin-left: auto; display: flex; }
.capbtn { width: 46px; height: 24px; display: flex; align-items: center; justify-content: center; }
.capbtn svg { width: 12px; height: 12px; fill: none; stroke: #111; stroke-width: 1; }
.caption-dim .capbtn svg { stroke: #999; }

.menu { height: 24px; flex: none; background: #fff; display: flex; align-items: center; padding-left: 8px; gap: 14px; font-family: "Noto Sans", "Open Sans", sans-serif; font-size: 11.500px; color: #111; }
.menu-r { height: 20px; padding-left: 7px; color: #555; }

.toolbar { flex: none; display: flex; align-items: center; background: #f0f0f0; }
.toolbar-left { height: 26px; padding-left: 3px; border-top: 1px solid #c8c8c8; border-bottom: 1px solid #a0a0a0; }
.toolbar-right { height: 27px; border-top: 1px solid #a8a8a8; }
.tbtn { display: flex; align-items: center; justify-content: center; gap: 4px; height: 22px; padding: 0; background: #f0f0f0; border: 1px solid; border-color: #fff #777 #777 #fff; font: 11px "Liberation Sans", Arial, sans-serif; color: #222; }
.tbtn-sim { width: 71px; }
.tbtn-tune { width: 72px; }
.tbtn-match { width: 75px; margin-left: 1.500px; margin-top: -2px; }
.ico18 { width: 18px; height: 18px; flex: none; }
.sep { flex: none; width: 7px; display: flex; justify-content: center; align-self: center; height: 20px; position: relative; }
.sep::before { content: ""; width: 1px; height: 100%; background: #a8a8a8; }
.sep-5 { width: 5px; }
.sep-7 { width: 7px; }
.sep-8 { width: 8px; }
.sep-9 { width: 9px; }
.sep-10 { width: 10px; }
.cell { width: 23px; height: 24px; flex: none; display: flex; align-items: center; justify-content: center; }
.rcell { width: 25px; height: 25px; flex: none; display: flex; align-items: center; justify-content: center; }
.rcell.is-on { background: #f8f8f8; border: 1px solid; border-color: #999 #fff #fff #999; }
.ico { width: 18px; height: 18px; flex: none; fill: none; stroke: #111; stroke-width: 1; }
.serif-a { font: bold 15px "Liberation Serif", serif; text-anchor: middle; fill: #111; stroke: none; }
.mini { font: 9px "Liberation Sans", sans-serif; text-anchor: middle; fill: #111; stroke: none; }
.tiny { font: 8px "Liberation Mono", monospace; text-anchor: middle; fill: #111; stroke: none; }
.redq { font: bold 14px "Liberation Sans", sans-serif; text-anchor: middle; fill: #c8102e; stroke: none; }

.body { flex: 1; min-height: 0; display: flex; background: #fff; }
.palette { width: 26px; flex: none; background: #f0f0f0; border-right: 1px solid #999; border-left: 1px solid #aaa; padding-top: 3px; display: flex; flex-direction: column; overflow: hidden; margin-right: 1px; }
.tool { height: 24px; flex: none; display: flex; align-items: center; justify-content: center; }
.tool-gap { margin-top: 1px; }
.hsep { flex: none; height: 8px; display: flex; align-items: center; }
.hsep::before { content: ""; height: 1px; width: 100%; background: #aaa; }
.hsep-b { height: 7px; }
.canvas { width: 646px; height: 318px; flex: none; display: block; background: #fff; }
.wire path, .plate path { fill: none; stroke: #111; stroke-width: 1; }
.plate path { stroke-width: 2; }
.open path { fill: #fff; stroke: #111; stroke-width: 1; }
.solid path { fill: #111; }
.lbl text { font-family: "Liberation Sans", Arial, sans-serif; font-size: 10.400px; fill: #222; white-space: pre; }
.portnum { font-family: "Liberation Sans", Arial, sans-serif; font-size: 16px; fill: #333; text-anchor: middle; }
.vscroll { flex: 1; background: #e8e8e8; border-left: 1px solid #ccc; display: flex; flex-direction: column; }
.vbtn { height: 18px; background: #f0f0f0; display: flex; align-items: center; justify-content: center; border-bottom: 1px solid #999; }
.vbtn svg { width: 9px; height: 6px; fill: #111; }
.vthumb { height: 16px; background: #f0f0f0; border-bottom: 1px solid #888; }

.main { flex: 1; min-height: 0; display: flex; }
.side { width: 65px; flex: none; display: flex; flex-direction: column; background: #f0f0f0; overflow: hidden; padding-top: 1px; }
.side-r { width: 62px; }
.graph { width: 438px; height: 603px; flex: none; display: block; background: #fff; }
.grid { fill: none; stroke: #808080; stroke-width: 1; shape-rendering: crispEdges; }
.trace-red { fill: none; stroke: #c80020; stroke-width: 1.100; }
.trace-blue { fill: none; stroke: #0000b8; stroke-width: 1.100; }
.mark { fill: none; stroke: #000; stroke-width: 1; }
.edit { height: 18px; flex: none; background: #fff; border: 1px solid; border-color: #808080 #f4f4f4 #f4f4f4 #808080; padding-left: 1px; font-size: 11px; line-height: 16px; color: #222; overflow: hidden; white-space: nowrap; }
.side .edit { margin-left: 1px; margin-right: 2px; letter-spacing: -0.500px; font-size: 12px; }
.side-r .edit { margin-left: 0; margin-right: 0; }
.edit-low { margin-top: auto; margin-bottom: -15px; }
.edit-low-r { margin-bottom: -12px; padding-left: 6px; }
.group { height: 82px; flex: none; margin-top: 181px; padding: 8px 0 0 9px; border: 1px solid; border-color: #f8f8f8 #aaa #aaa #f8f8f8; }
.side-r .group { padding-left: 5px; }
.radio-row { height: 16px; display: flex; align-items: center; gap: 6px; font-size: 12px; letter-spacing: -0.800px; color: #333; }
.radio { width: 11px; height: 11px; flex: none; border-radius: 50%; background: #f8f8f8; border: 1px solid; border-color: #777 #eee #eee #777; display: flex; align-items: center; justify-content: center; }
.radio-on::before { content: ""; width: 4px; height: 4px; border-radius: 50%; background: #000; }
.led { display: block; width: 9px; height: 9px; border-radius: 50%; flex: none; margin: 20px 0 0 24px; }
.side-r .led { margin-left: 24px; }
.led-red { background: #e00010; }
.led-blue { background: #0a10b0; }
.combo { height: 19px; flex: none; margin: 12px 2px 0 1px; display: flex; background: #fff; border: 1px solid; border-color: #808080 #ddd #ddd #808080; overflow: hidden; }
.side-r .combo { margin: 12px 0 0 1px; }
.combo-text { flex: 1; min-width: 0; overflow: hidden; white-space: nowrap; font-size: 12px; line-height: 17px; padding-left: 1px; }
.combo-btn { width: 16px; flex: none; display: flex; align-items: center; justify-content: center; background: #f0f0f0; border: 1px solid; border-color: #fff #777 #777 #fff; }
.combo-btn svg { width: 8px; height: 5px; fill: #000; }

.range { position: relative; height: 26px; flex: none; background: #f0f0f0; display: flex; align-items: flex-start; padding-left: 23px; font-size: 11px; color: #333; }
.range-start { width: 39px; margin-top: 6px; }
.edit-range { width: 78px; margin-top: 5px; padding-left: 2px; border-color: #808080 #fff #fff #808080; }
.range-stop { flex: 1; text-align: right; margin: 6px 12px 0 0; }
.range .edit-range:nth-of-type(2) { margin-right: 149px; }
.points { position: absolute; left: 247px; top: 1px; width: 71px; height: 19px; border-color: #808080 #f4f4f4 #f4f4f4 #808080; padding-left: 2px; font-size: 11px; }

.status { height: 21px; flex: none; background: #f0f0f0; display: flex; align-items: center; padding-left: 8px; font-size: 11px; color: #333; }
.stat { width: 80px; height: 18px; flex: none; margin-right: 8px; display: flex; align-items: center; padding-left: 3px; background: #ececec; border: 1px solid; border-color: #a0a0a0 #fff #fff #a0a0a0; white-space: nowrap; overflow: hidden; }
.stat-f { padding-left: 1px; }
.led-sm { margin: 0 4px 0 1px; width: 8px; height: 8px; }
.stat:nth-child(2) { margin-right: 7px; }
.hscroll { width: 272px; height: 18px; flex: none; margin-left: -1px; display: flex; background: #e6e6e6; }
.hbtn { width: 18px; flex: none; display: flex; align-items: center; justify-content: center; background: #f0f0f0; border: 1px solid; border-color: #fff #777 #777 #fff; }
.hbtn svg { width: 5px; height: 9px; fill: #000; }
.hthumb { width: 16px; flex: none; margin-left: 99px; background: #f0f0f0; border: 1px solid; border-color: #fff #777 #777 #fff; }
.hbtn-end { margin-left: auto; }
```
